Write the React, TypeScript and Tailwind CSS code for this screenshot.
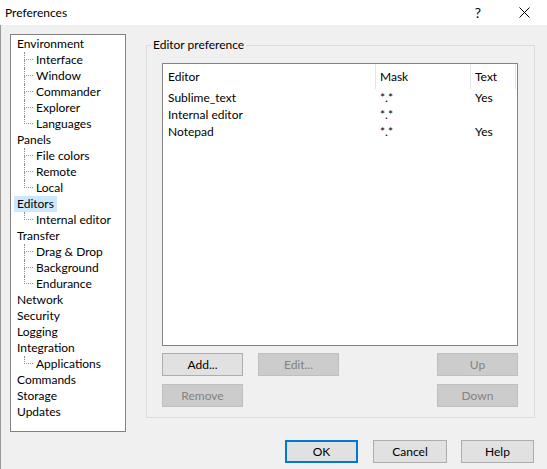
import React from "react";

type Node = { label: string; children?: string[]; selected?: boolean };

const tree: Node[] = [
  { label: "Environment", children: ["Interface", "Window", "Commander", "Explorer", "Languages"] },
  { label: "Panels", children: ["File colors", "Remote", "Local"] },
  { label: "Editors", children: ["Internal editor"], selected: true },
  { label: "Transfer", children: ["Drag & Drop", "Background", "Endurance"] },
  { label: "Network" },
  { label: "Security" },
  { label: "Logging" },
  { label: "Integration", children: ["Applications"] },
  { label: "Commands" },
  { label: "Storage" },
  { label: "Updates" },
];

const rows = [
  { editor: "Sublime_text", mask: "*.*", text: "Yes" },
  { editor: "Internal editor", mask: "*.*", text: "" },
  { editor: "Notepad", mask: "*.*", text: "Yes" },
];

function Btn({ label, disabled, w = "w-[81px]", def }: { label: string; disabled?: boolean; w?: string; def?: boolean }) {
  const base = `${w} h-[23px] flex items-center justify-center text-[12px] leading-none`;
  if (def)
    return <div className={`${base} bg-[#e1e1e1] border-2 border-[#0078d7] text-black`}>{label}</div>;
  if (disabled)
    return <div className={`${base} bg-[#cccccc] border border-[#bfbfbf] text-[#838383]`}>{label}</div>;
  return <div className={`${base} bg-[#e1e1e1] border border-[#adadad] text-black`}>{label}</div>;
}

export default function App() {
  return (
    <div
      className="w-[547px] h-[469px] overflow-hidden bg-white flex flex-col text-black"
      style={{ fontFamily: "Lato, 'Noto Sans', sans-serif" }}
    >
      {/* Title bar */}
      <div className="h-[25px] flex items-center bg-white shrink-0">
        <div className="pl-[5px] text-[12px] flex-1">Preferences</div>
        <div className="w-[46px] h-full flex items-center justify-center text-[14px]">?</div>
        <div className="w-[46px] h-full flex items-center justify-center">
          <svg width="11" height="11" viewBox="0 0 11 11">
            <path d="M0.5 0.5 L10.5 10.5 M10.5 0.5 L0.5 10.5" stroke="#000" strokeWidth="1" />
          </svg>
        </div>
      </div>

      {/* Body */}
      <div className="flex-1 bg-[#f0f0f0] border-l border-[#9a9a9a] flex flex-col">
        <div className="flex items-start pt-[9px] pl-[9px]">
          {/* Tree */}
          <div className="w-[116px] h-[398px] bg-white border border-[#828282] pt-px text-[12px]">
            {tree.map((n) => (
              <div key={n.label}>
                <div className="h-4 flex items-center pl-[3px]">
                  <span className={`px-[3px] h-4 leading-4 ${n.selected ? "bg-[#cce8ff]" : ""}`}>{n.label}</span>
                </div>
                {n.children?.map((c, i) => {
                  const last = i === n.children!.length - 1;
                  return (
                    <div key={c} className="h-4 flex items-stretch pl-[13px]">
                      <span className="w-[9px] grid grid-rows-2">
                        <span className="border-l border-b border-dotted border-[#8f8f8f]" />
                        <span className={last ? "" : "border-l border-dotted border-[#8f8f8f]"} />
                      </span>
                      <span className="pl-[3px] leading-4">{c}</span>
                    </div>
                  );
                })}
              </div>
            ))}
          </div>

          {/* Group box */}
          <fieldset className="ml-[20px] mt-[3px] w-[389px] border border-[#dcdcdc] p-0 m-0 min-w-0">
            <legend className="ml-[4px] px-[2px] text-[12px] leading-4">Editor preference</legend>
            <div className="pt-[10px] pb-[10px] pl-[15px] pr-[16px] flex flex-col">
              {/* List view */}
              <div className="h-[283px] bg-white border border-[#828282] text-[12px] flex flex-col">
                <div className="h-[25px] flex">
                  <div className="w-[213px] border-r border-[#e5e5e5] pl-[5px] flex items-center">Editor</div>
                  <div className="w-[95px] border-r border-[#e5e5e5] pl-[4px] flex items-center">Mask</div>
                  <div className="w-[45px] border-r border-[#e5e5e5] pl-[4px] flex items-center">Text</div>
                </div>
                {rows.map((r) => (
                  <div key={r.editor} className="h-[17px] flex items-center">
                    <div className="w-[213px] pl-[5px]">{r.editor}</div>
                    <div className="w-[95px] pl-[4px]">{r.mask}</div>
                    <div className="w-[45px] pl-[4px]">{r.text}</div>
                  </div>
                ))}
              </div>
              {/* Buttons */}
              <div className="mt-[7px] flex justify-between">
                <div className="flex gap-[15px]">
                  <Btn label="Add..." />
                  <Btn label="Edit..." disabled />
                </div>
                <Btn label="Up" disabled />
              </div>
              <div className="mt-[8px] flex justify-between">
                <Btn label="Remove" disabled />
                <Btn label="Down" disabled />
              </div>
            </div>
          </fieldset>
        </div>

        {/* Dialog buttons */}
        <div className="mt-[8px] flex justify-end pr-[13px]">
          <Btn label="OK" def w="w-[73px]" />
          <div className="w-[15px]" />
          <Btn label="Cancel" w="w-[74px]" />
          <div className="w-[14px]" />
          <Btn label="Help" w="w-[73px]" />
        </div>
      </div>
    </div>
  );
}
